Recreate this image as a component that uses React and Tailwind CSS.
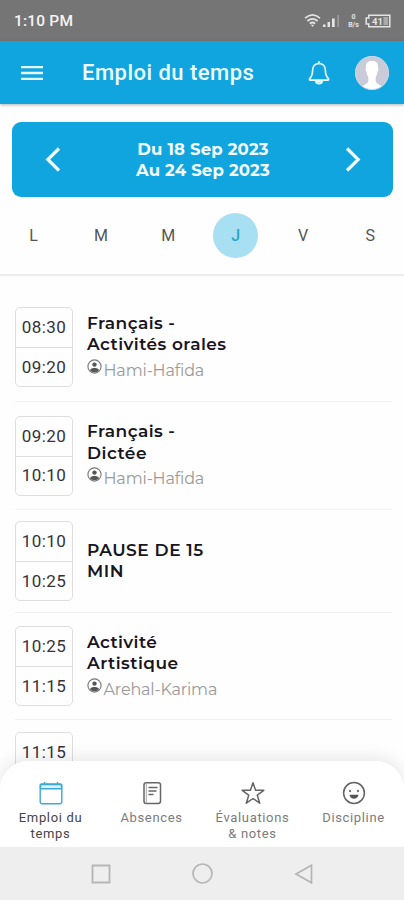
import React from "react";

const days = ["L", "M", "M", "J", "V", "S"];

const lessons = [
  { start: "08:30", end: "09:20", lines: [["Français -", "tracking-[0.4px]"], ["Activités orales", "tracking-[0.45px]"]], teacher: "Hami-Hafida", height: "h-[109px]" },
  { start: "09:20", end: "10:10", lines: [["Français -", "tracking-[0.4px]"], ["Dictée", "tracking-[0.5px]"]], teacher: "Hami-Hafida", height: "h-[108px]" },
  { start: "10:10", end: "10:25", lines: [["PAUSE DE 15", "tracking-[0.55px]"], ["MIN", "tracking-[0.5px]"]], height: "h-[103px]" },
  { start: "10:25", end: "11:15", lines: [["Activité", "tracking-[0.4px]"], ["Artistique", "tracking-[0.45px]"]], teacher: "Arehal-Karima", height: "h-[107px]" },
  { start: "11:15", end: "", lines: [], height: "h-[105px]" },
];

function StatusBar() {
  return (
    <div className="flex h-[41px] shrink-0 items-center justify-between bg-[#757575] pl-[14px] pr-[13px]">
      <span className="pt-[2px] font-[Roboto,sans-serif] text-[15.5px] font-medium tracking-[0.2px] text-[#f4f4f4]">1:10 PM</span>
      <div className="flex items-center text-[#e4e4e4]">
        <svg className="h-[14px] w-[17px]" viewBox="0 0 17 14" fill="none" stroke="currentColor" strokeWidth="1.7">
          <path d="M1 4.2Q8.5-2.4 16 4.2M3.4 7Q8.5 2.6 13.6 7M5.8 9.6Q8.5 7.4 11.2 9.6" />
          <path d="M6.8 10.8h3.4L8.5 13z" fill="currentColor" stroke="none" />
        </svg>
        <svg className="ml-[2px] h-[13px] w-[17px]" viewBox="0 0 17 13" fill="currentColor">
          <path d="M0 10.5h2.5V13H0zM4.500 8H7v5H4.500zM9 4.500h2.700V13H9z" />
          <path d="M14.5 1h1.3v12h-1.3z" opacity=".45" />
        </svg>
        <div className="ml-[8px] flex w-[11px] flex-col items-center font-[Roboto,sans-serif] text-[7px] font-bold leading-[8px]">
          <span>0</span>
          <span>B/s</span>
        </div>
        <svg className="ml-[6px] h-[14px] w-[26px]" viewBox="0 0 26 14">
          <path d="M3.8 1.2h21v11.6h-21V10H1.2V4h2.6z" fill="none" stroke="currentColor" strokeWidth="1.5" />
          <path d="M18.5 3h4.5v8h-4.5z" fill="#aaa" />
          <text x="7" y="10.6" fontSize="9.5" fontWeight="700" fontFamily="Roboto, sans-serif" fill="currentColor">41</text>
        </svg>
      </div>
    </div>
  );
}

function Header() {
  return (
    <header className="flex h-[63px] shrink-0 items-center bg-[#10a5df] pl-[21px] pr-[15px] text-white shadow-[0_1px_3px_rgba(0,0,0,0.3)]">
      <svg className="h-[16px] w-[22px]" viewBox="0 0 22 16" fill="#e4faff">
        <path d="M0 .9h22v2.4H0zM0 6.8h22v2.4H0zM0 12.7h22v2.4H0z" />
      </svg>
      <h1 className="ml-[39px] font-[Roboto,sans-serif] text-[22px] font-medium leading-[28px] tracking-[0.48px] text-[#edfcff]">Emploi du temps</h1>
      <svg className="ml-auto h-[26px] w-[22px]" viewBox="0 0 22 26" fill="none" stroke="#e4faff" strokeWidth="1.7" strokeLinecap="round" strokeLinejoin="round">
        <path d="M11 1.8v1.5M11 3.3C6.8 3.5 4.6 6.6 4.6 10.2c0 5.2-1.2 6.7-3 8.5-.5.7-.2 1.5.6 1.5h17.6c.8 0 1.1-.8.6-1.5-1.8-1.8-3-3.3-3-8.5 0-3.6-2.2-6.7-6.4-6.9z" />
        <path d="M7.8 21.2c.3 3.4 6.1 3.4 6.4 0z" fill="#a9e1f3" />
      </svg>
      <svg className="ml-[25px] h-[34px] w-[34px]" viewBox="0 0 34 34">
        <defs>
          <clipPath id="avatar"><circle cx="17" cy="17" r="16.5" /></clipPath>
        </defs>
        <circle cx="17" cy="17" r="17" fill="#c9cbd9" />
        <g clipPath="url(#avatar)">
          <path d="M11 12C10.500 6.500 13 5 17 5s6.500 1.500 6 7c.8.5.5 3.200-.5 3.800-.4 2.800-1 4.200-1.800 5.200v4.500c.5 1.800 3 2.500 5.300 4.500V34H8v-4c2.300-2 4.800-2.700 5.300-4.500V21c-.8-1-1.400-2.400-1.800-5.200-1-.6-1.300-3.300-.5-3.800z" fill="#fff" />
        </g>
        <circle cx="17" cy="17" r="16.5" fill="none" stroke="#c8d6e6" />
      </svg>
    </header>
  );
}

function Chevron({ d }) {
  return (
    <svg className="h-[26px] w-[16px]" viewBox="0 0 16 26" fill="none" stroke="#effcff" strokeWidth="3.2">
      <path d={d} />
    </svg>
  );
}

function WeekPicker() {
  return (
    <div className="ml-[12px] mr-[11px] mt-[18px] flex h-[75px] shrink-0 items-center justify-between rounded-[9px] bg-[#10a5df] pl-[33px] pr-[32px]">
      <Chevron d="M14 1.500 2.800 12.500 14 23.500" />
      <div className="pt-[1px] text-center text-[16.5px] font-bold leading-[21px] text-[#f4fdff]">
        <div className="tracking-[0.18px]">Du 18 Sep 2023</div>
        <div className="tracking-[0.18px]">Au 24 Sep 2023</div>
      </div>
      <Chevron d="M2 1.500 13.200 12.500 2 23.500" />
    </div>
  );
}

function DayTabs() {
  return (
    <div className="grid h-[79px] shrink-0 grid-cols-6 border-b-2 border-[#ededed] pt-[16px] font-[Roboto,sans-serif] text-[16px] text-[#555]">
      {days.map((day, i) => (
        <div key={i} className="flex justify-center">
          <span className={i === 3 ? "flex h-[45px] w-[45px] items-center justify-center rounded-full bg-[#a7dff3] font-medium text-[#2ba6cf]" : "flex h-[45px] w-[45px] items-center justify-center"}>{day}</span>
        </div>
      ))}
    </div>
  );
}

function PersonIcon() {
  return (
    <svg className="h-[15px] w-[15px]" viewBox="0 0 15 15">
      <circle cx="7.500" cy="7.500" r="6.600" fill="none" stroke="#777" strokeWidth="1.100" />
      <circle cx="7.500" cy="5.600" r="2.200" fill="#555" />
      <path d="M3 11c1.500-2.600 7.500-2.600 9 0-1.600 3-7.400 3-9 0z" fill="#555" />
    </svg>
  );
}

function Lesson({ lesson }) {
  return (
    <div className={`flex shrink-0 items-center border-b border-[#f0f0f0] ${lesson.height}`}>
      <div className="flex h-[80px] w-[58px] flex-col rounded-[5px] border-[1.500px] border-[#dedee0] text-center font-[Roboto,sans-serif] text-[17px] tracking-[0.4px] text-[#34323d]">
        <div className="flex h-[40px] items-center justify-center border-b border-[#dedee0] pt-[1px]">{lesson.start}</div>
        <div className="flex flex-1 items-center justify-center pt-[1px]">{lesson.end}</div>
      </div>
      <div className="ml-[14px] text-[17px] font-semibold leading-[21.500px] text-[#17151f]">
        {lesson.lines.map(([text, tracking]) => (
          <div key={text} className={tracking}>{text}</div>
        ))}
        {lesson.teacher && (
          <div className="mt-[3px] flex h-[23px] text-[16px] font-normal leading-[23px] text-[#999]">
            <PersonIcon />
            <span className="ml-[1.500px] tracking-[-0.150px]">{lesson.teacher}</span>
          </div>
        )}
      </div>
    </div>
  );
}

function CalendarIcon() {
  return (
    <svg className="h-[24px] w-[24px]" viewBox="0 0 24 24" fill="none" stroke="#3caad2" strokeWidth="1.400">
      <rect x="1.200" y="3" width="21.600" height="19.800" rx="2" />
      <path d="M1.500 3.500h21v4.300h-21z" fill="#d8f1f9" />
      <path d="M5.500 1v3M18.500 1v3" />
    </svg>
  );
}

function PaperIcon() {
  return (
    <svg className="h-[24px] w-[24px]" viewBox="0 0 24 24" fill="none" stroke="#666" strokeWidth="1.500">
      <rect x="4" y="1.700" width="16.500" height="20.800" rx="2.200" />
      <path d="M6.300 2v20.500" stroke="#aaa" strokeWidth="1" />
      <path d="M8.500 6.500h9M8.500 10h8M8.500 13.500h5" />
    </svg>
  );
}

function StarIcon() {
  return (
    <svg className="h-[24px] w-[24px]" viewBox="0 0 24 24" fill="none" stroke="#646464" strokeWidth="1.500" strokeLinejoin="round">
      <path d="m12 1.800 2.600 7.500h8.200l-6.500 4.900 2.400 8L12 17.500l-6.700 4.700 2.400-8-6.500-4.900h8.200z" />
    </svg>
  );
}

function SmileIcon() {
  return (
    <svg className="h-[24px] w-[24px]" viewBox="0 0 24 24" fill="none" stroke="#646464" strokeWidth="1.500">
      <circle cx="12" cy="12" r="10.400" />
      <path d="M7.500 13.700h9c-.7 5.500-8.300 5.500-9 0z" fill="#555" stroke="none" />
      <circle cx="8" cy="10" r="1.200" fill="#777" stroke="none" />
      <circle cx="16" cy="10" r="1.200" fill="#777" stroke="none" />
    </svg>
  );
}

const tabs = [
  { icon: CalendarIcon, lines: ["Emploi du", "temps"], tone: "text-[#444]" },
  { icon: PaperIcon, lines: ["Absences"], tone: "text-[#7b7b7b]" },
  { icon: StarIcon, lines: ["Évaluations", "& notes"], tone: "text-[#7b7b7b]" },
  { icon: SmileIcon, lines: ["Discipline"], tone: "text-[#7b7b7b]" },
];

function BottomTabs() {
  return (
    <nav className="relative -mt-[26px] grid h-[86px] shrink-0 grid-cols-4 rounded-t-[28px] bg-white shadow-[0_-4px_16px_rgba(0,0,0,0.09)]">
      {tabs.map(({ icon: Icon, lines, tone }) => (
        <div key={lines[0]} className="flex flex-col items-center pt-[20px]">
          <Icon />
          <div className={`mt-[5px] text-center font-[Roboto,sans-serif] text-[13px] leading-[16px] tracking-[0.650px] ${tone}`}>
            {lines.map((line) => (
              <div key={line}>{line}</div>
            ))}
          </div>
        </div>
      ))}
    </nav>
  );
}

function SystemNav() {
  return (
    <div className="relative flex h-[53px] shrink-0 items-center justify-center gap-[81px] bg-[#eeeeee]">
      <svg className="h-[20px] w-[20px]" viewBox="0 0 20 20" fill="none" stroke="#b5b5b5" strokeWidth="1.800"><path d="M1.500 1.500h17v17h-17z" /></svg>
      <svg className="h-[21px] w-[21px]" viewBox="0 0 21 21" fill="none" stroke="#b5b5b5" strokeWidth="1.700"><circle cx="10.500" cy="10.500" r="9.500" /></svg>
      <svg className="h-[20px] w-[20px]" viewBox="0 0 20 20" fill="none" stroke="#b5b5b5" strokeWidth="1.700"><path d="M17.500 1.200v17.600L2 10z" /></svg>
    </div>
  );
}

export default function App() {
  return (
    <div className="flex h-[900px] w-[404px] flex-col overflow-hidden bg-[#fefefe] font-[Montserrat,sans-serif]">
      <StatusBar />
      <Header />
      <WeekPicker />
      <DayTabs />
      <main className="flex min-h-0 flex-1 flex-col overflow-hidden pl-[15px] pr-[12px] pt-[17px]">
        {lessons.map((lesson) => (
          <Lesson key={lesson.start} lesson={lesson} />
        ))}
      </main>
      <BottomTabs />
      <SystemNav />
    </div>
  );
}
